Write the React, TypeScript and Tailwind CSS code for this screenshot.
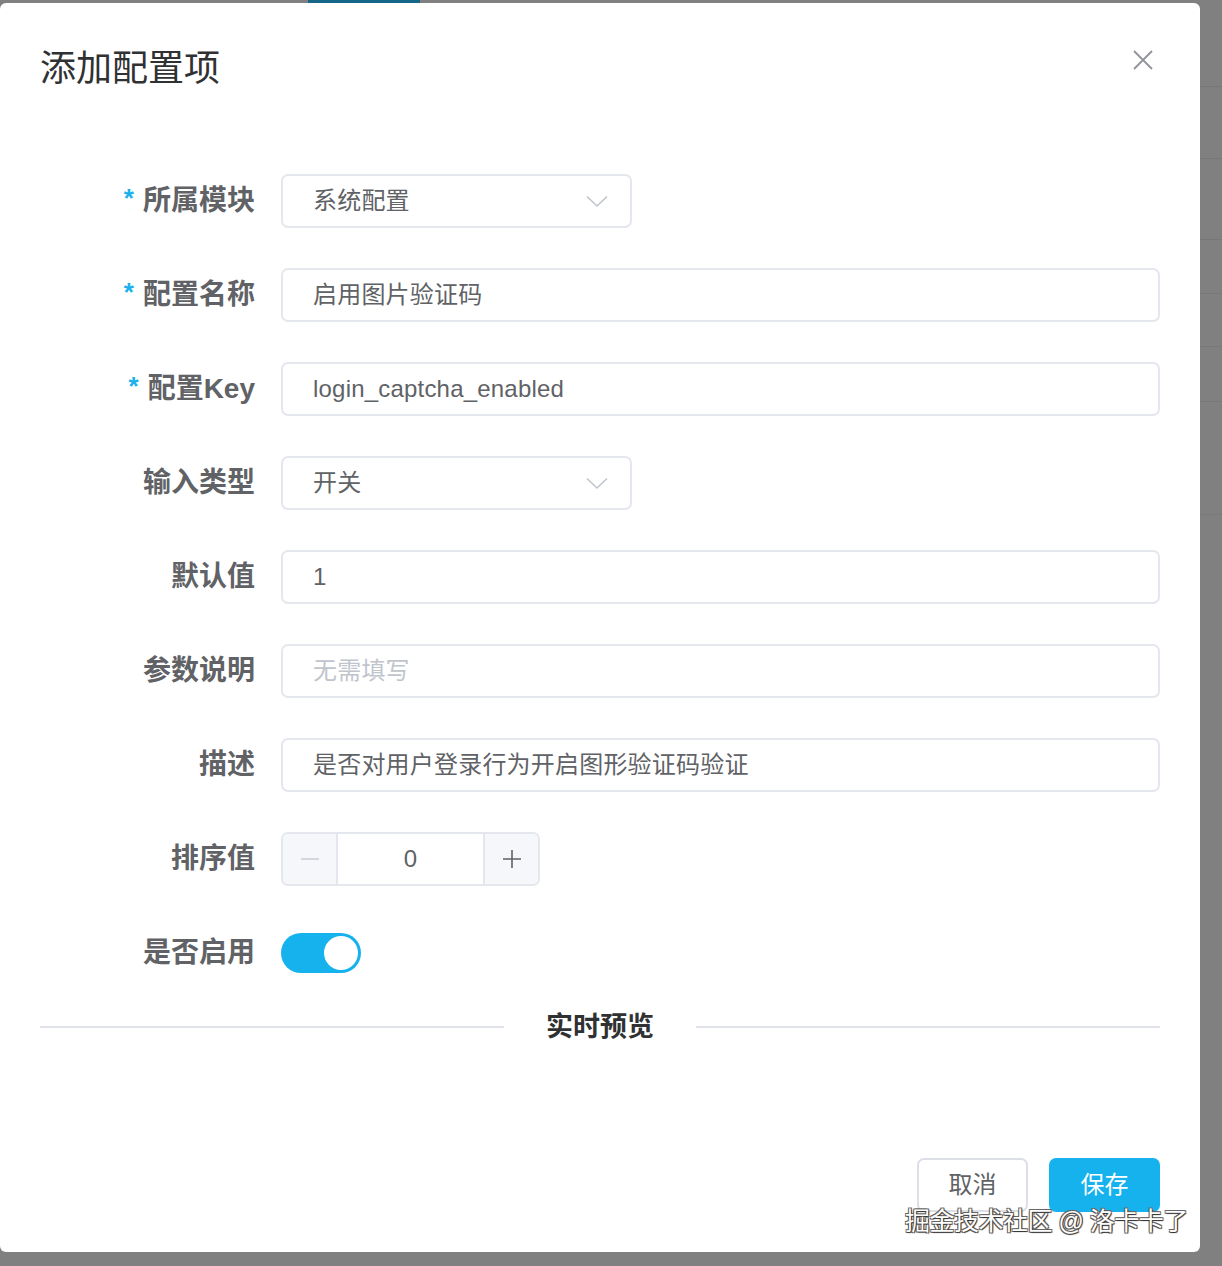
import React from 'react'

const font = { fontFamily: '"Liberation Sans", "Noto Sans CJK SC", sans-serif' }

function Label({ text, required }: { text: string; required?: boolean }) {
  return (
    <div className="w-[241px] shrink-0 pr-[26px] flex justify-end items-center">
      {required && <span className="text-[#1ab1ee] text-[26px] font-bold mr-[9px] leading-none -mt-[6px]">*</span>}
      <span className="text-[28px] font-bold text-[#606266] leading-none">{text}</span>
    </div>
  )
}

function Chevron() {
  return (
    <svg width="22" height="13" viewBox="0 0 22 13" fill="none">
      <path d="M1 1.5 L11 11 L21 1.5" stroke="#c0c4cc" strokeWidth="1.6" />
    </svg>
  )
}

function TextBox({ value, placeholder, select }: { value?: string; placeholder?: string; select?: boolean }) {
  return (
    <div
      className={`h-[54px] border-2 border-[#e4e7ed] rounded-[7px] flex items-center pl-[30px] pr-[22px] bg-white ${
        select ? 'w-[351px]' : 'flex-1'
      }`}
    >
      <span className={`flex-1 text-[24px] leading-none tracking-[0.2px] ${value ? 'text-[#606266]' : 'text-[#c0c4cc]'}`}>
        {value ?? placeholder}
      </span>
      {select && <Chevron />}
    </div>
  )
}

function Row({ label, required, children }: { label: string; required?: boolean; children: React.ReactNode }) {
  return (
    <div className="flex items-center h-[54px]">
      <Label text={label} required={required} />
      {children}
    </div>
  )
}

export default function App() {
  return (
    <div className="w-[1222px] h-[1266px] bg-[#808080] flex flex-col overflow-hidden" style={font}>
      {/* strip of the page behind the overlay */}
      <div className="h-[3px] shrink-0 flex">
        <div className="ml-[308px] w-[112px] bg-[#16668a]" />
      </div>

      <div className="flex flex-1">
        <div className="w-[1200px] h-[1249px] bg-white rounded-[6px] flex flex-col px-[40px] relative">
          {/* Header */}
          <div className="pt-[48px] flex justify-between items-start">
            <h2 className="text-[36px] leading-[36px] text-[#303133] font-normal">添加配置项</h2>
            <svg width="20" height="20" viewBox="0 0 20 20" className="-mt-[1px] mr-[7px]">
              <path d="M1 1 L19 19 M19 1 L1 19" stroke="#909399" strokeWidth="1.8" />
            </svg>
          </div>

          {/* Form */}
          <div className="mt-[87px] flex flex-col gap-[40px]">
            <Row label="所属模块" required>
              <TextBox value="系统配置" select />
            </Row>
            <Row label="配置名称" required>
              <TextBox value="启用图片验证码" />
            </Row>
            <Row label="配置Key" required>
              <TextBox value="login_captcha_enabled" />
            </Row>
            <Row label="输入类型">
              <TextBox value="开关" select />
            </Row>
            <Row label="默认值">
              <TextBox value="1" />
            </Row>
            <Row label="参数说明">
              <TextBox placeholder="无需填写" />
            </Row>
            <Row label="描述">
              <TextBox value="是否对用户登录行为开启图形验证码验证" />
            </Row>
            <Row label="排序值">
              <div className="w-[259px] h-[54px] border-2 border-[#e4e7ed] rounded-[7px] flex overflow-hidden">
                <div className="w-[55px] bg-[#f5f7fa] border-r-2 border-[#e4e7ed] flex items-center justify-center">
                  <span className="w-[18px] h-[2px] bg-[#d4d7de]" />
                </div>
                <div className="flex-1 flex items-center justify-center text-[24px] text-[#606266]">0</div>
                <div className="w-[55px] bg-[#f5f7fa] border-l-2 border-[#e4e7ed] flex items-center justify-center">
                  <svg width="18" height="18" viewBox="0 0 18 18">
                    <path d="M9 0 V18 M0 9 H18" stroke="#606266" strokeWidth="1.6" />
                  </svg>
                </div>
              </div>
            </Row>
            <Row label="是否启用">
              <div className="w-[80px] h-[40px] rounded-full bg-[#16b2ee] flex items-center justify-end pr-[3px]">
                <div className="w-[34px] h-[34px] rounded-full bg-white" />
              </div>
            </Row>
          </div>

          {/* Divider */}
          <div className="mt-[29px] h-[36px] flex items-center">
            <div className="flex-1 h-[2px] bg-[#e0e3e9]" />
            <span className="px-[42px] text-[27px] font-bold text-[#303133] leading-none">实时预览</span>
            <div className="flex-1 h-[2px] bg-[#e0e3e9]" />
          </div>

          {/* Footer */}
          <div className="mt-[113px] flex justify-end gap-[21px]">
            <button className="w-[111px] h-[54px] border-2 border-[#dcdfe6] rounded-[7px] bg-white text-[24px] text-[#606266]">
              取消
            </button>
            <button className="w-[111px] h-[54px] rounded-[7px] bg-[#16b2ee] text-[24px] text-white">保存</button>
          </div>

          {/* Watermark */}
          <div
            className="absolute left-[905px] top-[1206px] text-[25px] text-white whitespace-nowrap leading-none tracking-[-0.5px]"
            style={{ textShadow: '1px 1px 1px #333, -1px -1px 0 #666, 1px -1px 0 #666, -1px 1px 0 #666' }}
          >
            掘金技术社区 @ 洛卡卡了
          </div>
        </div>

        {/* right strip of the table behind */}
        <div className="flex-1 flex flex-col">
          <div className="h-[84px] border-b border-[#777]" />
          <div className="h-[72px] border-b border-[#777]" />
          <div className="h-[81px] border-b border-[#777]" />
          <div className="h-[54px] border-b border-[#787878]" />
          <div className="h-[53px] border-b border-[#787878]" />
          <div className="h-[55px] border-b border-[#787878]" />
          <div className="h-[113px] border-b border-[#7a7a7a]" />
        </div>
      </div>
    </div>
  )
}
